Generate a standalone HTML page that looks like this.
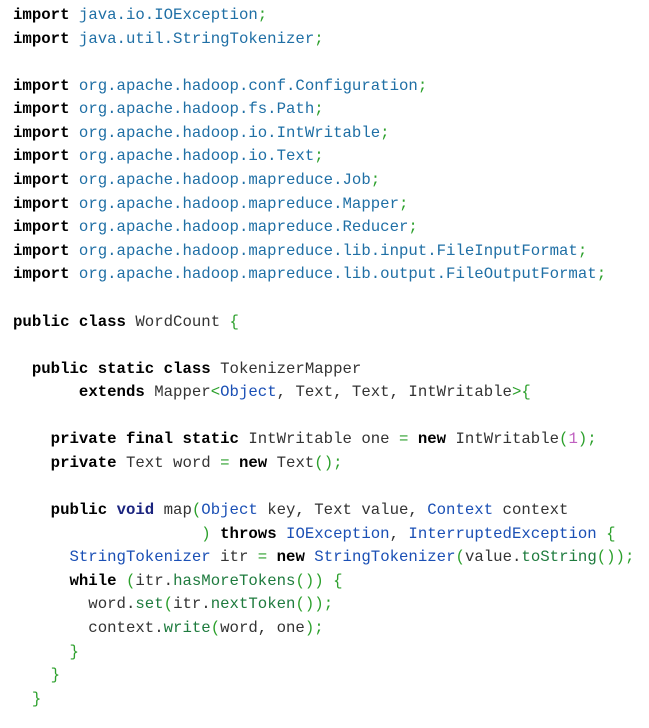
<!DOCTYPE html>
<html><head><meta charset="utf-8"><style>
html,body{margin:0;padding:0;background:#fff;width:649px;height:728px;overflow:hidden}
pre{margin:0;padding:4px 0 0 13px;font-family:"Liberation Mono",monospace;font-size:15.7px;line-height:23.58px;color:#333}
b{color:#000}
.p{color:#1f6fa5}.t{color:#1a4fb5}.g{color:#2ca02c}.m{color:#1e7b3e}.n{color:#c060c0}.v{color:#1a237e;font-weight:bold}
</style></head><body><pre><b>import</b> <span class="p">java.io.IOException</span><span class="g">;</span>
<b>import</b> <span class="p">java.util.StringTokenizer</span><span class="g">;</span>

<b>import</b> <span class="p">org.apache.hadoop.conf.Configuration</span><span class="g">;</span>
<b>import</b> <span class="p">org.apache.hadoop.fs.Path</span><span class="g">;</span>
<b>import</b> <span class="p">org.apache.hadoop.io.IntWritable</span><span class="g">;</span>
<b>import</b> <span class="p">org.apache.hadoop.io.Text</span><span class="g">;</span>
<b>import</b> <span class="p">org.apache.hadoop.mapreduce.Job</span><span class="g">;</span>
<b>import</b> <span class="p">org.apache.hadoop.mapreduce.Mapper</span><span class="g">;</span>
<b>import</b> <span class="p">org.apache.hadoop.mapreduce.Reducer</span><span class="g">;</span>
<b>import</b> <span class="p">org.apache.hadoop.mapreduce.lib.input.FileInputFormat</span><span class="g">;</span>
<b>import</b> <span class="p">org.apache.hadoop.mapreduce.lib.output.FileOutputFormat</span><span class="g">;</span>

<b>public class</b> WordCount <span class="g">{</span>

  <b>public static class</b> TokenizerMapper
       <b>extends</b> Mapper<span class="g">&lt;</span><span class="t">Object</span>, Text, Text, IntWritable<span class="g">&gt;{</span>

    <b>private final static</b> IntWritable one <span class="g">=</span> <b>new</b> IntWritable<span class="g">(</span><span class="n">1</span><span class="g">);</span>
    <b>private</b> Text word <span class="g">=</span> <b>new</b> Text<span class="g">();</span>

    <b>public</b> <span class="v">void</span> map<span class="g">(</span><span class="t">Object</span> key, Text value, <span class="t">Context</span> context
                    <span class="g">)</span> <b>throws</b> <span class="t">IOException</span>, <span class="t">InterruptedException</span> <span class="g">{</span>
      <span class="t">StringTokenizer</span> itr <span class="g">=</span> <b>new</b> <span class="t">StringTokenizer</span><span class="g">(</span>value.<span class="m">toString</span><span class="g">());</span>
      <b>while</b> <span class="g">(</span>itr.<span class="m">hasMoreTokens</span><span class="g">())</span> <span class="g">{</span>
        word.<span class="m">set</span><span class="g">(</span>itr.<span class="m">nextToken</span><span class="g">());</span>
        context.<span class="m">write</span><span class="g">(</span>word, one<span class="g">);</span>
      <span class="g">}</span>
    <span class="g">}</span>
  <span class="g">}</span>
</pre></body></html>
